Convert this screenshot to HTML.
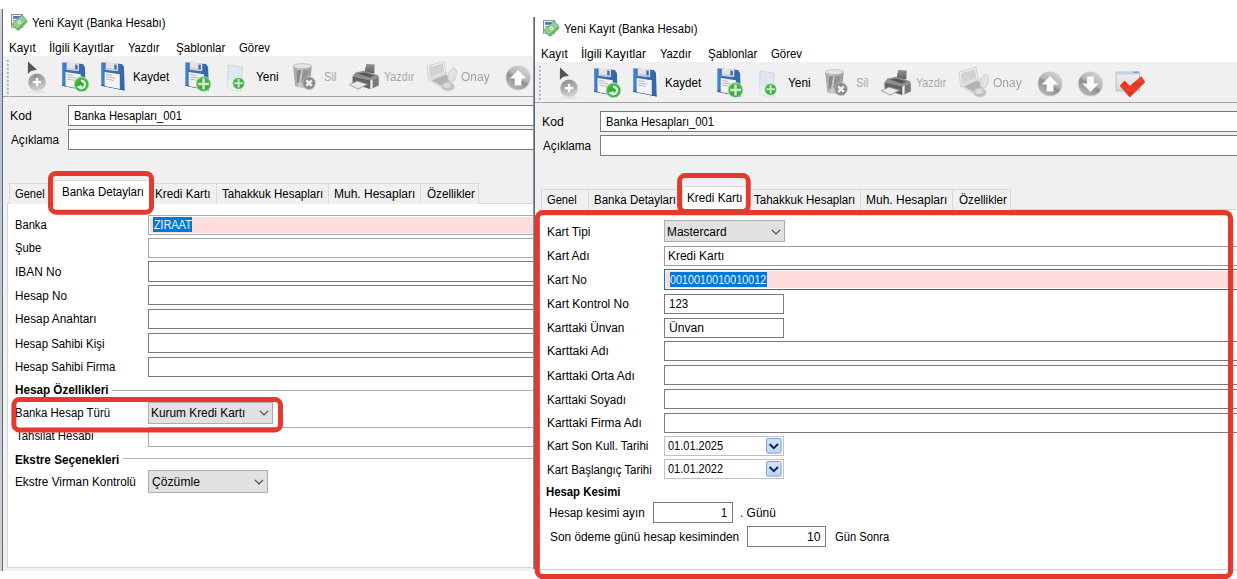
<!DOCTYPE html><html><head><meta charset="utf-8"><title>Yeni Kayıt (Banka Hesabı)</title><style>
html,body{margin:0;padding:0;background:#fff;}
body{width:1237px;height:579px;overflow:hidden;position:relative;font-family:"Liberation Sans",sans-serif;font-size:12px;color:#000;}
.b{position:absolute;box-sizing:content-box;}
.t{position:absolute;white-space:nowrap;line-height:24px;height:24px;transform-origin:0 0;font-size:12px;}
.win{position:absolute;overflow:hidden;}
</style></head><body><svg width="0" height="0" style="position:absolute"><defs>
<linearGradient id="gDate" x1="0" y1="0" x2="0" y2="1"><stop offset="0" stop-color="#d3e4fa"/><stop offset="1" stop-color="#bcd5f6"/></linearGradient>
<radialGradient id="gGreen" cx="0.5" cy="0.55" r="0.6"><stop offset="0" stop-color="#27a32c"/><stop offset="0.65" stop-color="#3cb83e"/><stop offset="1" stop-color="#7fd67c"/></radialGradient>
<linearGradient id="gGrey" x1="0.8" y1="0" x2="0.2" y2="1"><stop offset="0" stop-color="#d6d6d6"/><stop offset="0.45" stop-color="#b4b4b4"/><stop offset="0.55" stop-color="#8f8f8f"/><stop offset="1" stop-color="#bdbdbd"/></linearGradient>
<linearGradient id="gGrey2" x1="0.3" y1="0" x2="0.6" y2="1"><stop offset="0" stop-color="#8e8e8e"/><stop offset="0.55" stop-color="#b2b2b2"/><stop offset="1" stop-color="#d4d4d4"/></linearGradient>
<linearGradient id="gBlue" x1="0" y1="0" x2="1" y2="0"><stop offset="0" stop-color="#4a8ad6"/><stop offset="0.15" stop-color="#3b74bd"/><stop offset="1" stop-color="#3566a8"/></linearGradient>
<linearGradient id="gRed" x1="0" y1="0" x2="0" y2="1"><stop offset="0" stop-color="#f4553c"/><stop offset="0.35" stop-color="#e8321f"/><stop offset="0.6" stop-color="#f2402a"/><stop offset="1" stop-color="#d8281a"/></linearGradient>
<linearGradient id="gBin" x1="0" y1="0" x2="1" y2="0"><stop offset="0" stop-color="#9c9c9c"/><stop offset="0.35" stop-color="#cdcdcd"/><stop offset="0.7" stop-color="#b0b0b0"/><stop offset="1" stop-color="#979797"/></linearGradient>
<linearGradient id="gWin" x1="0" y1="0" x2="0" y2="1"><stop offset="0" stop-color="#f4f4f4"/><stop offset="1" stop-color="#d5d5d5"/></linearGradient>
<linearGradient id="gPrn" x1="0" y1="0" x2="0" y2="1"><stop offset="0" stop-color="#929292"/><stop offset="1" stop-color="#5d5d5d"/></linearGradient>
<g id="floppy">
 <path d="M0 0 L20.7 1.7 L22.8 4.8 L23.5 28.3 L0 23.5 Z" fill="url(#gBlue)"/>
 <path d="M0 23.5 L23.5 28.3 L23.5 27 L0 22.3 Z" fill="#2f5d9c"/>
 <path d="M4.5 0.3 L16.9 1.4 L16.9 8.7 L4.5 7.6 Z" fill="#e4e4e4"/>
 <path d="M4.5 5.5 L16.9 6.6 L16.9 8.7 L4.5 7.6 Z" fill="#cfcfcf"/>
 <path d="M13.1 2.4 L15.5 2.6 L15.5 7.3 L13.1 7.1 Z" fill="#3b6db3"/>
 <path d="M3.4 9.7 L18.6 12.1 L18.6 26.9 L3.4 23.9 Z" fill="#f4f4f4"/>
 <path d="M5 12.3 L11 13.2 M5 14.6 L14 16 M5 16.9 L13 18.2" stroke="#9aa3ad" stroke-width="0.7" fill="none"/>
</g>
<g id="gplus">
 <circle r="7.5" fill="url(#gGreen)" stroke="#cfe9cd" stroke-width="0.6"/>
 <path d="M-5.4 0 H5.4 M0 -5.4 V5.4" stroke="#dde1dd" stroke-width="2.5"/>
</g>
<g id="gcirc">
 <circle r="12.9" fill="#e1e1e1"/>
 <circle r="12" fill="url(#gGrey)"/>
</g>

<g id="titleicon">
 <rect x="11.5" y="14.5" width="11" height="12.7" fill="#f4f4f4" stroke="#8f8f8f"/>
 <rect x="13" y="16" width="8" height="2.8" fill="#4a78c6"/>
 <rect x="13" y="20" width="4" height="1" fill="#9a9a9a"/>
 <g transform="translate(20.4,23.9) rotate(-43)">
  <rect x="-6.2" y="-3.3" width="12.4" height="6.6" fill="#7cc47a" stroke="#55aa58" stroke-width="0.8"/>
 </g>
 <g transform="translate(19.4,22.3) rotate(-43)">
  <rect x="-6.7" y="-3.6" width="13.4" height="7.2" fill="#8bcc88" stroke="#4fa553" stroke-width="0.9"/>
  <rect x="-5.3" y="-2.3" width="10.6" height="4.6" fill="none" stroke="#a9dba6" stroke-width="0.6"/>
  <circle r="1.9" fill="#e4f4e2"/><circle r="0.8" fill="#7cc47a"/>
 </g>
</g>

<g id="tb">
 <!-- 1 cursor+plus -->
 <ellipse cx="37" cy="92" rx="9" ry="1.2" fill="#e4e4e4"/>
 <circle cx="37" cy="82.2" r="9.2" fill="#dcdcdc"/>
 <circle cx="37" cy="82.2" r="8.5" fill="url(#gGrey2)"/>
 <path d="M32.9 82.2 H41.1 M37 78.1 V86.3" stroke="#fff" stroke-width="2.2"/>
 <path d="M27.1 59.6 L38.6 70.3 L31.8 71.6 L27.0 76 Z" fill="#fbfbfb"/><path d="M27.9 61.2 L37 69.8 L31.1 70.9 L27.8 74 Z" fill="#555"/>
 <!-- 2 floppy + refresh -->
 <use href="#floppy" x="62.1" y="62.2"/>
 <g transform="translate(81.5,84.3)"><circle r="7.5" fill="url(#gGreen)" stroke="#cfe9cd" stroke-width="0.6"/>
  <path d="M-0.6 -3.3 A3.5 3.5 0 1 1 -1.2 3.4" fill="none" stroke="#e6f4e6" stroke-width="2.3"/>
  <path d="M-5.2 2.6 L0.2 0.4 L0.2 5.8 Z" fill="#e6f4e6"/></g>
 <!-- 3 floppy -->
 <use href="#floppy" x="101.2" y="62.2"/>
 <!-- 4 floppy + plus -->
 <use href="#floppy" x="185.3" y="62.2"/>
 <use href="#gplus" x="203.5" y="84"/>
 <!-- 5 doc + plus -->
 <path d="M228 65 L242.2 67 L241.6 91.5 L227.3 88.4 Z" fill="#dfe8f1" stroke="#c6d1dd" stroke-width="0.8"/>
 <path d="M227.6 80 L241.9 82.2 L241.6 91.5 L227.3 88.4 Z" fill="#e9eff6"/>
 <g transform="translate(238.6,83.3) scale(0.79)"><use href="#gplus"/></g>
 <!-- 6 trash -->
 <path d="M293.2 66.5 L295.2 86.3 Q302.4 89.4 309.7 86.3 L311.7 66.5 Z" fill="url(#gBin)"/>
 <path d="M296.6 70.5 L301.3 69.6 L299 83 L296.8 82.5 Z" fill="#8a8a8a"/>
 <path d="M303 69.4 L308.6 70.2 L306.6 80 L301.2 82.6 Z" fill="#939393"/>
 <ellipse cx="302.4" cy="66.1" rx="9.3" ry="2.5" fill="#e4e4e4" stroke="#b4b4b4" stroke-width="0.7"/>
 <circle cx="309" cy="83.1" r="6.4" fill="#8a8a8a" stroke="#c4c4c4" stroke-width="0.7"/>
 <path d="M306.2 80.3 L311.8 85.9 M311.8 80.3 L306.2 85.9" stroke="#eeeeee" stroke-width="2.5"/>
 <!-- 7 printer -->
 <path d="M366.2 64.1 L374.7 64.5 L374.3 73.6 L364.6 72 Z" fill="url(#gPrn)"/>
 <path d="M355.5 72.4 L364 70.8 L377.6 75 L378.8 77 L370.5 80.2 L352.5 76.3 Z" fill="#8e8e8e"/>
 <path d="M358 73.6 L364.5 72.4 L374.5 75.4 L369.6 77.5 Z" fill="#555"/>
 <path d="M352.5 76.3 L370.5 80.2 L370.5 89.2 L365 87.4 L352.6 83.4 Z" fill="#646464"/>
 <path d="M370.5 80.2 L378.8 77 L378.8 85.6 L370.5 89.2 Z" fill="#7a7a7a"/>
 <path d="M370.5 80.4 L372.6 79.6 L372.6 88.2 L370.5 89.2 Z" fill="#f3f3f3"/>
 <path d="M349.3 84.7 L357 81 L367.5 84.3 L358.2 89.1 Z" fill="#e9e9e9" stroke="#8f8f8f" stroke-width="0.8"/>
 <!-- 8 onay -->
 <path d="M427.1 66.1 L444.1 61.3 L446 72.4 L428.6 80.2 Z" fill="#efefef" stroke="#c6c6c6" stroke-width="0.7" stroke-linejoin="round"/>
 <path d="M428.9 67.3 L442.9 63.3 L444.3 71.7 L430 78 Z" fill="#d2d2d2"/>
 <path d="M428.6 80.2 L446 72.4 L455.7 79.2 L443.1 88.9 Z" fill="#e6e6e6" stroke="#c9c9c9" stroke-width="0.6" stroke-linejoin="round"/>
 <path d="M431.6 80.4 L445.6 74.2 L452.8 79.2 L442.9 86.8 Z" fill="#b4b4b4"/>
 <ellipse cx="452.3" cy="74.9" rx="3.9" ry="6.9" transform="rotate(20 452.3 74.9)" fill="#e2e2e2" stroke="#c9c9c9" stroke-width="0.7"/>
 <ellipse cx="448" cy="86.6" rx="6.4" ry="4.4" fill="#c0c0c0" stroke="#d6d6d6" stroke-width="0.6"/>
 <ellipse cx="447" cy="85.4" rx="3.8" ry="2.5" fill="#dcdcdc"/>
 <!-- 9 up -->
 <use href="#gcirc" x="518.1" y="77.8"/>
 <path d="M518.1 70 L526.4 78.4 L521.5 78.4 L521.5 85.6 L514.7 85.6 L514.7 78.4 L509.8 78.4 Z" fill="#fafafa"/>
 <!-- 10 down -->
 <use href="#gcirc" x="558.5" y="77.8"/>
 <path d="M558.5 86 L566.8 77.6 L561.9 77.6 L561.9 70.4 L555.1 70.4 L555.1 77.6 L550.2 77.6 Z" fill="#fafafa"/>
 <!-- 11 check -->
 <rect x="584" y="66" width="23.6" height="18.9" fill="url(#gWin)" stroke="#a5b4d3" stroke-width="0.8"/>
 <rect x="584" y="66" width="23.6" height="2.6" fill="#c3d1ec"/>
 <rect x="601" y="65.6" width="5.6" height="1.4" fill="#7f97cf"/>
 <path d="M588.6 79.9 L592.6 75.3 L597.8 80.6 L609.2 71.2 L612.4 76.1 L597.8 90.6 Z" fill="url(#gRed)" stroke="#e03a28" stroke-width="1.2" stroke-linejoin="round"/>
</g>
</defs></svg><div class="win" style="left:0;top:0;width:533px;height:579px;"><div class="b" style="left:0px;top:9px;width:540px;height:47px;background:#fff;"></div><div class="b" style="left:3px;top:56px;width:537px;height:40px;background:#f0f0f0;"></div><div class="b" style="left:3px;top:96px;width:537px;height:1px;background:#a3a3a3;"></div><div class="b" style="left:3px;top:97px;width:537px;height:474px;background:#f0f0f0;"></div><div class="b" style="left:0px;top:9px;width:2px;height:562px;background:linear-gradient(#d4d6da,#b9c4d4 12%,#bcc5d2 60%,#d2d2d2);"></div><div class="b" style="left:2px;top:9px;width:1px;height:562px;background:#626873;"></div><svg class="b" style="left:5px;top:57px" width="6" height="40" viewBox="0 0 6 40"><rect x="2.6" y="1.90" width="1.8" height="1.8" fill="#fcfcfc"/><rect x="1.8" y="2.70" width="2" height="2" fill="#adadad"/><rect x="2.6" y="5.90" width="1.8" height="1.8" fill="#fcfcfc"/><rect x="1.8" y="6.70" width="2" height="2" fill="#adadad"/><rect x="2.6" y="9.90" width="1.8" height="1.8" fill="#fcfcfc"/><rect x="1.8" y="10.70" width="2" height="2" fill="#adadad"/><rect x="2.6" y="13.90" width="1.8" height="1.8" fill="#fcfcfc"/><rect x="1.8" y="14.70" width="2" height="2" fill="#adadad"/><rect x="2.6" y="17.90" width="1.8" height="1.8" fill="#fcfcfc"/><rect x="1.8" y="18.70" width="2" height="2" fill="#adadad"/><rect x="2.6" y="21.90" width="1.8" height="1.8" fill="#fcfcfc"/><rect x="1.8" y="22.70" width="2" height="2" fill="#adadad"/><rect x="2.6" y="25.90" width="1.8" height="1.8" fill="#fcfcfc"/><rect x="1.8" y="26.70" width="2" height="2" fill="#adadad"/><rect x="2.6" y="29.90" width="1.8" height="1.8" fill="#fcfcfc"/><rect x="1.8" y="30.70" width="2" height="2" fill="#adadad"/><rect x="2.6" y="33.90" width="1.8" height="1.8" fill="#fcfcfc"/><rect x="1.8" y="34.70" width="2" height="2" fill="#adadad"/><rect x="2.6" y="37.90" width="1.8" height="1.8" fill="#fcfcfc"/><rect x="1.8" y="38.70" width="2" height="2" fill="#adadad"/></svg><svg class="b" style="left:0;top:0" width="540" height="100" viewBox="0 0 540 100"><use href="#titleicon"/><use href="#tb"/></svg><div class="b" style="left:68px;top:105px;width:475px;height:19px;border:1px solid #7a7a7a;background:#fff;"></div><div class="b" style="left:68px;top:129px;width:475px;height:19px;border:1px solid #7a7a7a;background:#fff;"></div><span class="t" style="left:31.76px;top:10.80px;transform:scaleX(0.9515);color:#000;">Yeni Kayıt (Banka Hesabı)</span><span class="t" style="left:9.22px;top:35.60px;transform:scaleX(0.9752);color:#000;">Kayıt</span><span class="t" style="left:49.20px;top:35.60px;transform:scaleX(1.0031);color:#000;">İlgili Kayıtlar</span><span class="t" style="left:127.67px;top:35.60px;transform:scaleX(0.9313);color:#000;">Yazdır</span><span class="t" style="left:175.61px;top:35.60px;transform:scaleX(0.9740);color:#000;">Şablonlar</span><span class="t" style="left:238.73px;top:35.60px;transform:scaleX(0.9488);color:#000;">Görev</span><span class="t" style="left:132.53px;top:64.50px;transform:scaleX(0.9683);color:#000;">Kaydet</span><span class="t" style="left:255.55px;top:64.50px;transform:scaleX(0.9909);color:#000;">Yeni</span><span class="t" style="left:324.33px;top:64.50px;transform:scaleX(0.9333);color:#a3a3a3;will-change:transform;">Sil</span><span class="t" style="left:383.78px;top:64.50px;transform:scaleX(0.8955);color:#a3a3a3;will-change:transform;">Yazdır</span><span class="t" style="left:461.20px;top:64.50px;transform:scaleX(1.0018);color:#a3a3a3;will-change:transform;">Onay</span><span class="t" style="left:10.38px;top:103.60px;transform:scaleX(1.0177);color:#000;">Kod</span><span class="t" style="left:11.40px;top:127.60px;transform:scaleX(0.9737);color:#000;">Açıklama</span><span class="t" style="left:74.06px;top:103.60px;transform:scaleX(0.9368);color:#000;">Banka Hesapları_001</span><div class="b" style="left:7px;top:203px;width:540px;height:363px;border:1px solid #d5d5d5;background:#fff;"></div><div class="b" style="left:9px;top:183px;width:46px;height:20px;border:1px solid #d9d9d9;border-bottom:none;background:#f0f0f0;"></div><div class="b" style="left:152px;top:183px;width:63px;height:20px;border:1px solid #d9d9d9;border-bottom:none;background:#f0f0f0;"></div><div class="b" style="left:216px;top:183px;width:111px;height:20px;border:1px solid #d9d9d9;border-bottom:none;background:#f0f0f0;"></div><div class="b" style="left:328px;top:183px;width:91px;height:20px;border:1px solid #d9d9d9;border-bottom:none;background:#f0f0f0;"></div><div class="b" style="left:420px;top:183px;width:57px;height:20px;border:1px solid #d9d9d9;border-bottom:none;background:#f0f0f0;"></div><div class="b" style="left:54px;top:180px;width:98px;height:24px;border:1px solid #d9d9d9;border-bottom:none;background:#fff;"></div><span class="t" style="left:15.04px;top:181.60px;transform:scaleX(0.9268);color:#000;">Genel</span><span class="t" style="left:62.34px;top:179.60px;transform:scaleX(0.9610);color:#000;">Banka Detayları</span><span class="t" style="left:155.22px;top:181.60px;transform:scaleX(0.9780);color:#000;">Kredi Kartı</span><span class="t" style="left:222.26px;top:181.60px;transform:scaleX(0.9606);color:#000;">Tahakkuk Hesapları</span><span class="t" style="left:334.40px;top:181.60px;transform:scaleX(0.9994);color:#000;">Muh. Hesapları</span><span class="t" style="left:427.01px;top:181.60px;transform:scaleX(0.9723);color:#000;">Özellikler</span><div class="b" style="left:148px;top:215px;width:395px;height:18px;border:1px solid #a3a9b0;background:#ffdddd;box-shadow:inset 0 0 0 1px #fff;"></div><div class="b" style="left:148px;top:238px;width:395px;height:18px;border:1px solid #a9a9a9;background:#fff;"></div><div class="b" style="left:148px;top:261px;width:395px;height:19px;border:1px solid #7a7a7a;background:#fff;"></div><div class="b" style="left:148px;top:285px;width:395px;height:18px;border:1px solid #7a7a7a;background:#fff;"></div><div class="b" style="left:148px;top:309px;width:395px;height:18px;border:1px solid #7a7a7a;background:#fff;"></div><div class="b" style="left:148px;top:333px;width:395px;height:18px;border:1px solid #7a7a7a;background:#fff;"></div><div class="b" style="left:148px;top:357px;width:395px;height:18px;border:1px solid #7a7a7a;background:#fff;"></div><div class="b" style="left:153.3px;top:217.4px;width:38.4px;height:14.2px;background:#0078d7;"></div><div class="b" style="left:112px;top:390px;width:540px;height:1px;background:#b4b4b4;"></div><div class="b" style="left:123px;top:458px;width:540px;height:1px;background:#b4b4b4;"></div><div class="b" style="left:148px;top:401.5px;width:122.5px;height:20.4px;border:1px solid #adadad;background:#e1e1e1;"></div><svg class="b" style="left:257.9px;top:408.0px" width="12" height="10" viewBox="0 0 12 10"><path d="M1.9 2.9 L6 7 L10.1 2.9" fill="none" stroke="#444" stroke-width="1.1"/></svg><div class="b" style="left:148px;top:427px;width:395px;height:18px;border:1px solid #a4abb3;background:#fff;"></div><div class="b" style="left:148px;top:470.4px;width:117.5px;height:20.6px;border:1px solid #adadad;background:#e1e1e1;"></div><svg class="b" style="left:252.8px;top:477.0px" width="12" height="10" viewBox="0 0 12 10"><path d="M1.9 2.9 L6 7 L10.1 2.9" fill="none" stroke="#444" stroke-width="1.1"/></svg><span class="t" style="left:14.97px;top:212.60px;transform:scaleX(0.9303);color:#000;">Banka</span><span class="t" style="left:15.43px;top:235.60px;transform:scaleX(0.9333);color:#000;">Şube</span><span class="t" style="left:14.91px;top:259.50px;transform:scaleX(0.9923);color:#000;">IBAN No</span><span class="t" style="left:14.93px;top:283.50px;transform:scaleX(0.9731);color:#000;">Hesap No</span><span class="t" style="left:14.91px;top:307.30px;transform:scaleX(0.9863);color:#000;">Hesap Anahtarı</span><span class="t" style="left:14.95px;top:331.50px;transform:scaleX(0.9507);color:#000;">Hesap Sahibi Kişi</span><span class="t" style="left:14.95px;top:355.20px;transform:scaleX(0.9522);color:#000;">Hesap Sahibi Firma</span><span class="t" style="left:15.17px;top:378.10px;transform:scaleX(0.9746);color:#000;font-weight:700;">Hesap Özellikleri</span><span class="t" style="left:15.25px;top:401.00px;transform:scaleX(0.9527);color:#000;">Banka Hesap Türü</span><span class="t" style="left:15.66px;top:424.30px;transform:scaleX(0.9511);color:#000;">Tahsilat Hesabı</span><span class="t" style="left:15.17px;top:447.80px;transform:scaleX(0.9777);color:#000;font-weight:700;">Ekstre Seçenekleri</span><span class="t" style="left:14.92px;top:469.70px;transform:scaleX(0.9811);color:#000;">Ekstre Virman Kontrolü</span><span class="t" style="left:153.57px;top:212.60px;transform:scaleX(0.9067);color:#fff;will-change:transform;">ZIRAAT</span><span class="t" style="left:151.11px;top:400.90px;transform:scaleX(0.9887);color:#000;">Kurum Kredi Kartı</span><span class="t" style="left:151.79px;top:469.70px;transform:scaleX(1.0129);color:#000;">Çözümle</span></div><div class="win" style="left:533px;top:6px;width:704px;height:573px;"><div class="b" style="left:-1px;top:0;width:706px;height:573px;"><div class="b" style="left:0px;top:9px;width:706px;height:47px;background:#fff;"></div><div class="b" style="left:3px;top:56px;width:703px;height:40px;background:#f0f0f0;"></div><div class="b" style="left:3px;top:96px;width:703px;height:1px;background:#a3a3a3;"></div><div class="b" style="left:3px;top:97px;width:703px;height:468px;background:#f0f0f0;"></div><div class="b" style="left:0px;top:9px;width:2px;height:554px;background:linear-gradient(#d4d6da,#b9c4d4 12%,#bcc5d2 60%,#d2d2d2);"></div><div class="b" style="left:2px;top:9px;width:1px;height:554px;background:#626873;"></div><svg class="b" style="left:5px;top:57px" width="6" height="40" viewBox="0 0 6 40"><rect x="2.6" y="1.90" width="1.8" height="1.8" fill="#fcfcfc"/><rect x="1.8" y="2.70" width="2" height="2" fill="#adadad"/><rect x="2.6" y="5.90" width="1.8" height="1.8" fill="#fcfcfc"/><rect x="1.8" y="6.70" width="2" height="2" fill="#adadad"/><rect x="2.6" y="9.90" width="1.8" height="1.8" fill="#fcfcfc"/><rect x="1.8" y="10.70" width="2" height="2" fill="#adadad"/><rect x="2.6" y="13.90" width="1.8" height="1.8" fill="#fcfcfc"/><rect x="1.8" y="14.70" width="2" height="2" fill="#adadad"/><rect x="2.6" y="17.90" width="1.8" height="1.8" fill="#fcfcfc"/><rect x="1.8" y="18.70" width="2" height="2" fill="#adadad"/><rect x="2.6" y="21.90" width="1.8" height="1.8" fill="#fcfcfc"/><rect x="1.8" y="22.70" width="2" height="2" fill="#adadad"/><rect x="2.6" y="25.90" width="1.8" height="1.8" fill="#fcfcfc"/><rect x="1.8" y="26.70" width="2" height="2" fill="#adadad"/><rect x="2.6" y="29.90" width="1.8" height="1.8" fill="#fcfcfc"/><rect x="1.8" y="30.70" width="2" height="2" fill="#adadad"/><rect x="2.6" y="33.90" width="1.8" height="1.8" fill="#fcfcfc"/><rect x="1.8" y="34.70" width="2" height="2" fill="#adadad"/><rect x="2.6" y="37.90" width="1.8" height="1.8" fill="#fcfcfc"/><rect x="1.8" y="38.70" width="2" height="2" fill="#adadad"/></svg><svg class="b" style="left:0;top:0" width="705" height="100" viewBox="0 0 705 100"><use href="#titleicon"/><use href="#tb"/></svg><div class="b" style="left:68px;top:105px;width:641px;height:19px;border:1px solid #7a7a7a;background:#fff;"></div><div class="b" style="left:68px;top:129px;width:641px;height:19px;border:1px solid #7a7a7a;background:#fff;"></div><span class="t" style="left:31.76px;top:10.80px;transform:scaleX(0.9515);color:#000;">Yeni Kayıt (Banka Hesabı)</span><span class="t" style="left:9.22px;top:35.60px;transform:scaleX(0.9752);color:#000;">Kayıt</span><span class="t" style="left:49.20px;top:35.60px;transform:scaleX(1.0031);color:#000;">İlgili Kayıtlar</span><span class="t" style="left:127.67px;top:35.60px;transform:scaleX(0.9313);color:#000;">Yazdır</span><span class="t" style="left:175.61px;top:35.60px;transform:scaleX(0.9740);color:#000;">Şablonlar</span><span class="t" style="left:238.73px;top:35.60px;transform:scaleX(0.9488);color:#000;">Görev</span><span class="t" style="left:132.53px;top:64.50px;transform:scaleX(0.9683);color:#000;">Kaydet</span><span class="t" style="left:255.55px;top:64.50px;transform:scaleX(0.9909);color:#000;">Yeni</span><span class="t" style="left:324.33px;top:64.50px;transform:scaleX(0.9333);color:#a3a3a3;will-change:transform;">Sil</span><span class="t" style="left:383.78px;top:64.50px;transform:scaleX(0.8955);color:#a3a3a3;will-change:transform;">Yazdır</span><span class="t" style="left:461.20px;top:64.50px;transform:scaleX(1.0018);color:#a3a3a3;will-change:transform;">Onay</span><span class="t" style="left:10.38px;top:103.60px;transform:scaleX(1.0177);color:#000;">Kod</span><span class="t" style="left:11.40px;top:127.60px;transform:scaleX(0.9737);color:#000;">Açıklama</span><span class="t" style="left:74.06px;top:103.60px;transform:scaleX(0.9368);color:#000;">Banka Hesapları_001</span><div class="b" style="left:7px;top:203px;width:706px;height:359px;border:1px solid #d5d5d5;background:#fff;"></div><div class="b" style="left:9px;top:183px;width:46px;height:20px;border:1px solid #d9d9d9;border-bottom:none;background:#f0f0f0;"></div><div class="b" style="left:56px;top:183px;width:95px;height:20px;border:1px solid #d9d9d9;border-bottom:none;background:#f0f0f0;"></div><div class="b" style="left:216px;top:183px;width:111px;height:20px;border:1px solid #d9d9d9;border-bottom:none;background:#f0f0f0;"></div><div class="b" style="left:328px;top:183px;width:91px;height:20px;border:1px solid #d9d9d9;border-bottom:none;background:#f0f0f0;"></div><div class="b" style="left:420px;top:183px;width:57px;height:20px;border:1px solid #d9d9d9;border-bottom:none;background:#f0f0f0;"></div><div class="b" style="left:150px;top:180px;width:66px;height:24px;border:1px solid #d9d9d9;border-bottom:none;background:#fff;"></div><span class="t" style="left:15.04px;top:181.60px;transform:scaleX(0.9268);color:#000;">Genel</span><span class="t" style="left:62.34px;top:181.60px;transform:scaleX(0.9610);color:#000;">Banka Detayları</span><span class="t" style="left:155.22px;top:179.60px;transform:scaleX(0.9780);color:#000;">Kredi Kartı</span><span class="t" style="left:222.26px;top:181.60px;transform:scaleX(0.9606);color:#000;">Tahakkuk Hesapları</span><span class="t" style="left:334.40px;top:181.60px;transform:scaleX(0.9994);color:#000;">Muh. Hesapları</span><span class="t" style="left:427.01px;top:181.60px;transform:scaleX(0.9723);color:#000;">Özellikler</span><div class="b" style="left:132px;top:214.3px;width:119.2px;height:20px;border:1px solid #adadad;background:#e1e1e1;"></div><svg class="b" style="left:238.20000000000005px;top:220.60000000000002px" width="12" height="10" viewBox="0 0 12 10"><path d="M1.9 2.9 L6 7 L10.1 2.9" fill="none" stroke="#444" stroke-width="1.1"/></svg><div class="b" style="left:132px;top:240px;width:598px;height:18px;border:1px solid #9a9a9a;background:#fff;"></div><div class="b" style="left:132px;top:263px;width:598px;height:19px;border:1px solid #0078d7;background:#ffdddd;box-shadow:inset 0 0 0 1px #fff;"></div><div class="b" style="left:138px;top:266.1px;width:97px;height:14.6px;background:#0078d7;"></div><div class="b" style="left:132px;top:287.5px;width:118px;height:18px;border:1px solid #7a7a7a;background:#fff;"></div><div class="b" style="left:132px;top:311.5px;width:118px;height:18px;border:1px solid #7a7a7a;background:#fff;"></div><div class="b" style="left:132px;top:335.3px;width:598px;height:18px;border:1px solid #7a7a7a;background:#fff;"></div><div class="b" style="left:132px;top:359.3px;width:598px;height:18px;border:1px solid #7a7a7a;background:#fff;"></div><div class="b" style="left:132px;top:383.1px;width:598px;height:18px;border:1px solid #7a7a7a;background:#fff;"></div><div class="b" style="left:132px;top:406.9px;width:598px;height:18px;border:1px solid #7a7a7a;background:#fff;"></div><div class="b" style="left:132px;top:430.3px;width:118px;height:18px;border:1px solid #bcc1c9;background:#fff;"></div><div class="b" style="left:132px;top:453.3px;width:118px;height:18px;border:1px solid #bcc1c9;background:#fff;"></div><svg class="b" style="left:233.70000000000005px;top:432.4px" width="17" height="16" viewBox="0 0 17 16"><rect x="0.5" y="0.5" width="14.6" height="14.6" rx="1.5" fill="url(#gDate)" stroke="#7a9fd0"/><path d="M3.6 6 L7.8 10.2 L12 6" fill="none" stroke="#14254a" stroke-width="2"/></svg><svg class="b" style="left:233.70000000000005px;top:455.0px" width="17" height="16" viewBox="0 0 17 16"><rect x="0.5" y="0.5" width="14.6" height="14.6" rx="1.5" fill="url(#gDate)" stroke="#7a9fd0"/><path d="M3.6 6 L7.8 10.2 L12 6" fill="none" stroke="#14254a" stroke-width="2"/></svg><div class="b" style="left:120.89999999999998px;top:496.3px;width:78.2px;height:18.3px;border:1px solid #7a7a7a;background:#fff;"></div><div class="b" style="left:214.70000000000005px;top:520.3px;width:77.5px;height:18.3px;border:1px solid #7a7a7a;background:#fff;"></div><span class="t" style="left:14.82px;top:213.70px;transform:scaleX(0.9846);color:#000;">Kart Tipi</span><span class="t" style="left:14.80px;top:238.00px;transform:scaleX(0.9975);color:#000;">Kart Adı</span><span class="t" style="left:14.82px;top:261.70px;transform:scaleX(0.9809);color:#000;">Kart No</span><span class="t" style="left:14.80px;top:285.50px;transform:scaleX(0.9988);color:#000;">Kart Kontrol No</span><span class="t" style="left:14.82px;top:309.50px;transform:scaleX(0.9818);color:#000;">Karttaki Ünvan</span><span class="t" style="left:14.79px;top:333.40px;transform:scaleX(1.0093);color:#000;">Karttaki Adı</span><span class="t" style="left:14.80px;top:357.70px;transform:scaleX(0.9977);color:#000;">Karttaki Orta Adı</span><span class="t" style="left:14.83px;top:381.60px;transform:scaleX(0.9691);color:#000;">Karttaki Soyadı</span><span class="t" style="left:14.81px;top:405.40px;transform:scaleX(0.9930);color:#000;">Karttaki Firma Adı</span><span class="t" style="left:14.84px;top:428.00px;transform:scaleX(0.9643);color:#000;">Kart Son Kull. Tarihi</span><span class="t" style="left:14.85px;top:451.60px;transform:scaleX(0.9537);color:#000;">Kart Başlangıç Tarihi</span><span class="t" style="left:14.49px;top:474.00px;transform:scaleX(0.9450);color:#000;font-weight:700;">Hesap Kesimi</span><span class="t" style="left:17.32px;top:494.80px;transform:scaleX(0.9756);color:#000;">Hesap kesimi ayın</span><span class="t" style="left:208.21px;top:494.80px;transform:scaleX(0.9927);color:#000;">. Günü</span><span class="t" style="left:17.81px;top:518.80px;transform:scaleX(0.9882);color:#000;">Son ödeme günü hesap kesiminden</span><span class="t" style="left:302.73px;top:518.80px;transform:scaleX(0.9357);color:#000;">Gün Sonra</span><span class="t" style="left:135.21px;top:213.70px;transform:scaleX(0.9923);color:#000;">Mastercard</span><span class="t" style="left:135.71px;top:238.00px;transform:scaleX(0.9927);color:#000;">Kredi Kartı</span><span class="t" style="left:138.35px;top:261.90px;transform:scaleX(0.9031);color:#fff;will-change:transform;">0010010010010012</span><span class="t" style="left:137.04px;top:285.70px;transform:scaleX(0.9568);color:#000;">123</span><span class="t" style="left:136.99px;top:309.50px;transform:scaleX(1.0121);color:#000;">Ünvan</span><span class="t" style="left:136.14px;top:428.40px;transform:scaleX(0.9169);color:#000;">01.01.2025</span><span class="t" style="left:136.14px;top:451.20px;transform:scaleX(0.9169);color:#000;">01.01.2022</span><span class="t" style="left:188.59px;top:494.80px;transform:scaleX(0.9143);color:#000;">1</span><span class="t" style="left:275.48px;top:518.80px;transform:scaleX(1.0167);color:#000;">10</span></div></div><div class="b" style="left:533px;top:17px;width:1px;height:552px;background:#8a93a6;"></div><div class="b" style="left:533px;top:0px;width:4px;height:16.8px;background:#fff;"></div><svg class="b" style="left:0;top:0" width="1237" height="579" viewBox="0 0 1237 579"><rect x="50.50" y="173.50" width="101.00" height="38.70" rx="5.50" fill="none" stroke="#e5392e" stroke-width="5"/><rect x="13.90" y="399.60" width="266.60" height="30.30" rx="5.50" fill="none" stroke="#e5392e" stroke-width="5"/><rect x="679.55" y="175.55" width="68.70" height="35.80" rx="5.55" fill="none" stroke="#e5392e" stroke-width="4.9"/><rect x="537.20" y="212.60" width="693.40" height="364.10" rx="5.90" fill="none" stroke="#e5392e" stroke-width="5.2"/></svg></body></html>
